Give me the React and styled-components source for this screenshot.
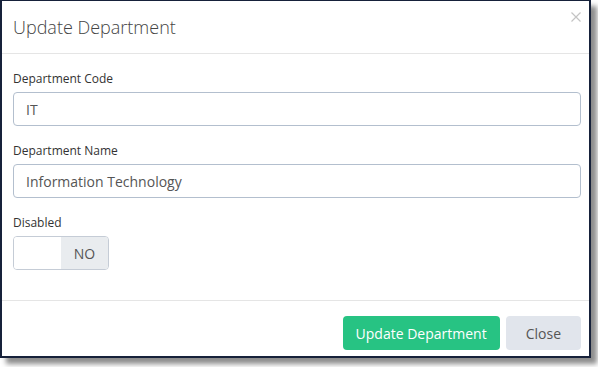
import React from 'react'
import styled, { createGlobalStyle } from 'styled-components'

const GlobalStyle = createGlobalStyle`
  html, body {
    margin: 0;
    padding: 0;
    background: #fff;
  }
  body {
    font-family: "Open Sans", "Liberation Sans", sans-serif;
    color: #333;
  }
`

const Screen = styled.div`
  width: 598px;
  height: 367px;
  overflow: hidden;
`

const Modal = styled.div`
  box-sizing: border-box;
  width: 591px;
  height: 358px;
  background: #fff;
  border: 2px solid #16213a;
  border-top-width: 1px;
  box-shadow: 6px 6px 5px rgba(0, 0, 0, 0.45);
  display: flex;
  flex-direction: column;
`

const Header = styled.div`
  position: relative;
  height: 53px;
  padding: 0 8px 0 11px;
  box-sizing: border-box;
  display: flex;
  align-items: center;
  border-bottom: 1px solid #e5e5e5;
`

const Title = styled.h4`
  margin: 0;
  font-size: 18px;
  font-weight: 300;
  color: #444;
`

const CloseX = styled.button`
  position: absolute;
  top: 10px;
  right: 7px;
  width: 12px;
  height: 12px;
  padding: 0;
  border: 0;
  background: none;
  cursor: pointer;
`

const Body = styled.div`
  padding: 16px 8px 0 11px;
  display: flex;
  flex-direction: column;
  gap: 16px;
  flex: 1;
`

const Group = styled.div`
  display: flex;
  flex-direction: column;
`

const Label = styled.label`
  font-size: 12px;
  line-height: 17px;
  color: #333;
  margin-bottom: 5px;
`

const Input = styled.input`
  box-sizing: border-box;
  height: 34px;
  width: 100%;
  padding: 0 12px;
  border: 1px solid #b3bfce;
  border-radius: 4px;
  font-family: inherit;
  font-size: 14px;
  color: #555;
  outline: none;
`

const Toggle = styled.div`
  box-sizing: border-box;
  width: 96px;
  height: 34px;
  display: flex;
  border: 1px solid #c5ccd6;
  border-radius: 4px;
  overflow: hidden;
`

const ToggleHalf = styled.span`
  flex: 1;
  display: flex;
  align-items: center;
  justify-content: center;
  font-size: 14px;
  color: #555;
  background: ${p => (p.$off ? '#e9ecef' : '#fff')};
`

const Footer = styled.div`
  border-top: 1px solid #e5e5e5;
  padding: 15px 8px 0 11px;
  height: 40px;
  display: flex;
  justify-content: flex-end;
  gap: 6px;
`

const Button = styled.button`
  height: 34px;
  padding: 0 ${p => (p.$primary ? '13px' : '20px')};
  border: 0;
  border-radius: 4px;
  font-family: inherit;
  font-size: 14px;
  color: ${p => (p.$primary ? '#fff' : '#555')};
  background: ${p => (p.$primary ? '#27c383' : '#e1e5ec')};
  cursor: pointer;
`

export default function App () {
  return (
    <Screen>
      <GlobalStyle />
      <Modal>
        <Header>
          <Title>Update Department</Title>
          <CloseX aria-label='close'>
            <svg width='12' height='12' viewBox='0 0 12 12'>
              <path d='M1.5 1.5 L10.5 10.5 M10.5 1.5 L1.5 10.5' stroke='#c4c4c4' strokeWidth='1.2' />
            </svg>
          </CloseX>
        </Header>
        <Body>
          <Group>
            <Label>Department Code</Label>
            <Input defaultValue='IT' />
          </Group>
          <Group>
            <Label>Department Name</Label>
            <Input defaultValue='Information Technology' />
          </Group>
          <Group>
            <Label>Disabled</Label>
            <Toggle>
              <ToggleHalf />
              <ToggleHalf $off>NO</ToggleHalf>
            </Toggle>
          </Group>
        </Body>
        <Footer>
          <Button $primary>Update Department</Button>
          <Button>Close</Button>
        </Footer>
      </Modal>
    </Screen>
  )
}
